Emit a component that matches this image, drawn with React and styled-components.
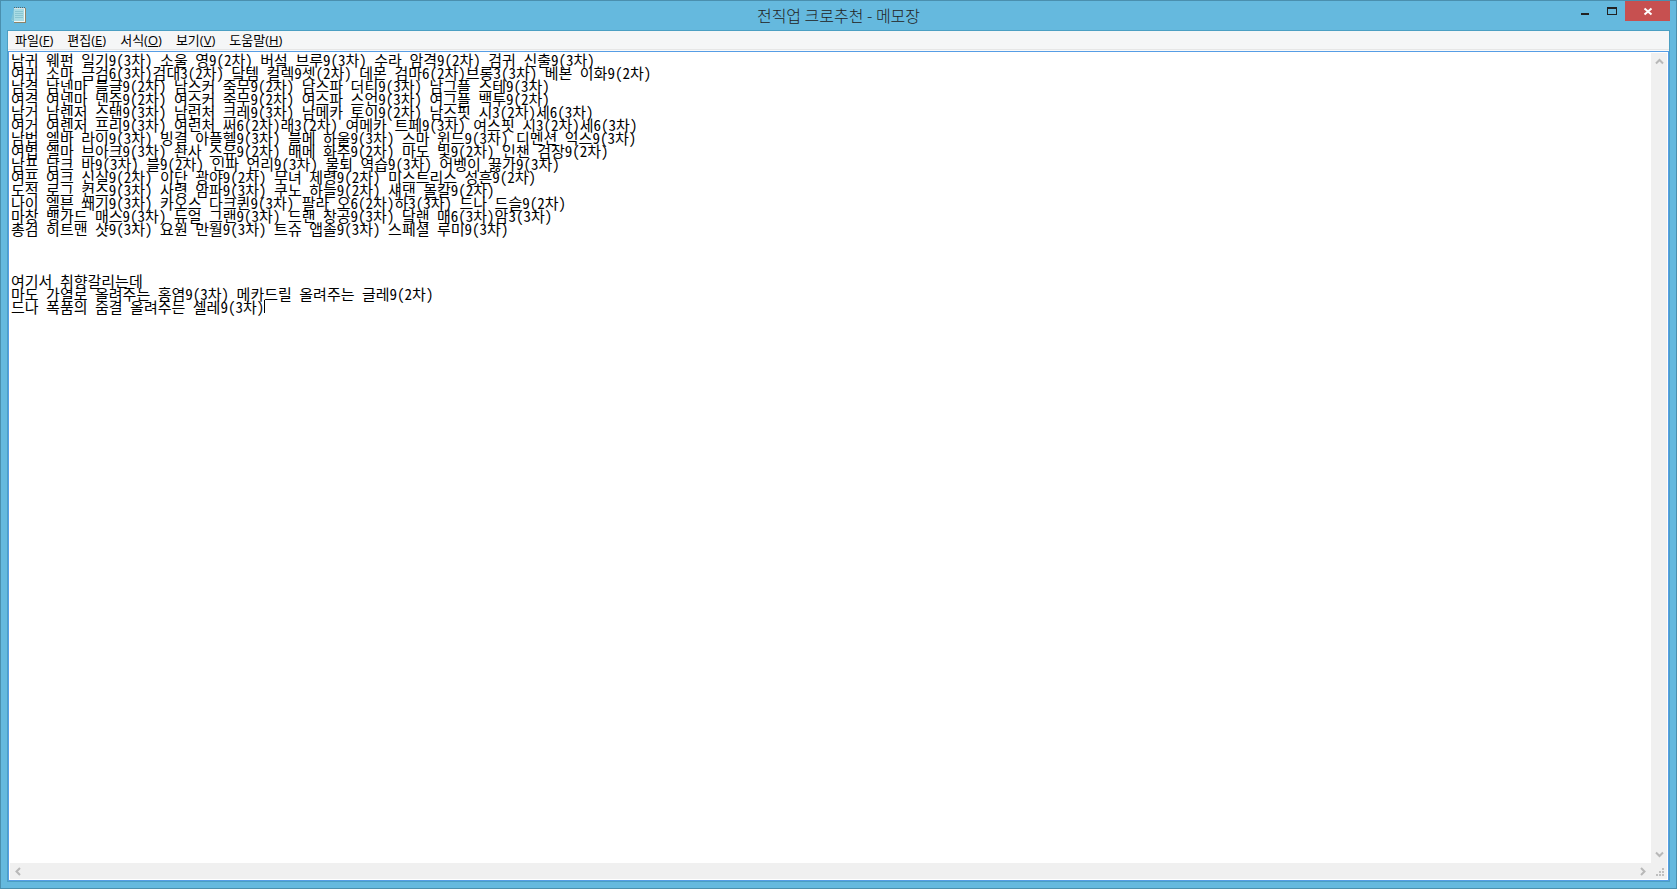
import { useState } from 'react';
import styled, { createGlobalStyle } from 'styled-components';

const LINE = 13;

const memo = `남귀 웨펀 일기9(3차) 소울 영9(2차) 버섴 브루9(3차) 수라 암격9(2차) 검귀 신출9(3차)
여귀 소마 금검6(3차)검대3(2차) 닼템 컬렉9셋(2차) 데몬 검마6(2차)브롱3(3차) 베본 이화9(2차)
남격 남넨마 블글9(2차) 남스커 죽무9(2차) 남스파 더티9(3차) 남그플 스테9(3차)
여격 여넨마 넨슈9(2차) 여스커 죽무9(2차) 여스파 스언9(3차) 여그플 백투9(2차)
남거 남렌저 스탠9(3차) 남런처 크레9(3차) 남메카 토이9(2차) 남스핏 시3(2차)세6(3차)
여거 여렌저 프리9(3차) 여런처 써6(2차)래3(2차) 여메카 트페9(3차) 여스핏 시3(2차)세6(3차)
남법 엘바 라이9(3차) 빙결 아플헬9(3차) 블메 하울9(3차) 스마 윈드9(3차) 디멘션 익스9(3차)
여법 엘마 브아크9(3차) 솬사 스유9(2차) 배메 화추9(2차) 마도 빛9(2차) 인챈 검장9(2차)
남프 남크 바9(3차) 블9(2차) 인파 언리9(3차) 물퇴 역습9(3차) 어벵이 끓가9(3차)
여프 여크 신실9(2차) 이단 광야9(2차) 무녀 제령9(2차) 미스트리스 성흔9(2차)
도적 로그 컨스9(3차) 사령 암파9(3차) 쿠노 하늘9(2차) 섀댄 몰칼9(2차)
나이 엘븐 쐐기9(3차) 카오스 다크퀸9(3차) 팔라 오6(2차)하3(3차) 드나 드슬9(2차)
마창 뱅가드 매스9(3차) 듀얼 그랜9(3차) 드랜 창공9(3차) 닼랜 매6(3차)암3(3차)
총검 히트맨 샷9(3차) 요원 만월9(3차) 트슈 앱솔9(3차) 스페셜 루미9(3차)



여기서 취향갈리는데
마도 가열로 올려주는 홍염9(3차) 메카드릴 올려주는 글레9(2차)
드나 폭품의 숨결 올려주는 셀레9(3차)`;

const menus = [
  { name: '파일', accessKey: 'F' },
  { name: '편집', accessKey: 'E' },
  { name: '서식', accessKey: 'O' },
  { name: '보기', accessKey: 'V' },
  { name: '도움말', accessKey: 'H' },
];

// 글자 폭 (em): 한글 0.92, 나머지 0.5
const measure = (line) =>
  [...line].reduce((sum, ch) => sum + (ch.charCodeAt(0) > 255 ? 0.92 : 0.5), 0);

const caretPlace = (text) => {
  const lines = text.split('\n');
  return {
    left: `${measure(lines[lines.length - 1])}em`,
    top: (lines.length - 1) * LINE,
  };
};

const chevrons = {
  up: 'M1 6.5 4.5 3 8 6.5',
  down: 'M1 1.5 4.5 5 8 1.5',
  left: 'M6 1 2.5 4.5 6 8',
  right: 'M2 1 5.5 4.5 2 8',
};

const Arrow = ({ to, label }) => (
  <SArrow type="button" aria-label={label}>
    <svg width="9" height="9" viewBox="0 0 9 9">
      <path d={chevrons[to]} fill="none" stroke="#b8b8b8" strokeWidth="2" />
    </svg>
  </SArrow>
);

const NotepadIcon = () => (
  <svg width="16" height="18" viewBox="0 0 16 18">
    <path d="M4 2h11v15H3z" fill="#8d8468" />
    <path d="M3 2h11v14H3z" fill="#f3f8f6" />
    <path d="M3 3h10v12H1z" fill="#a9dce4" />
    <path d="M0 14 3 3v12z" fill="#7fc3d6" />
    <path d="M4 5.5h8M4 7.5h8M4 9.5h8M4 11.5h8" stroke="#8ac6d2" />
    <path d="M3 1.5h11" stroke="#4f6a70" strokeDasharray="1 1" />
    <path d="M3 2.5h11" stroke="#d6e4e6" />
  </svg>
);

export default function App() {
  const [text, setText] = useState(memo);

  return (
    <>
      <GlobalStyle />
      <SWindow>
        <STitleBar>
          <SIconWrapper>
            <NotepadIcon />
          </SIconWrapper>
          <STitle>전직업 크로추천 - 메모장</STitle>
          <SControls>
            <SControl type="button" aria-label="최소화">
              <svg width="26" height="20" viewBox="0 0 26 20">
                <path d="M8 12h8v2H8z" fill="#222" />
              </svg>
            </SControl>
            <SControl type="button" aria-label="최대화">
              <svg width="26" height="20" viewBox="0 0 26 20">
                <path d="M8 6h10v8H8zM9 8v5h8V8z" fill="#222" fillRule="evenodd" />
              </svg>
            </SControl>
            <SControl type="button" aria-label="닫기" $close>
              <svg width="45" height="20" viewBox="0 0 45 20">
                <path d="M19.5 7.5l7 6M26.5 7.5l-7 6" stroke="#fff" strokeWidth="2" />
              </svg>
            </SControl>
          </SControls>
        </STitleBar>
        <SClient>
          <SMenuBar>
            {menus.map((menu) => (
              <SMenuButton type="button" key={menu.name}>
                {menu.name}(<u>{menu.accessKey}</u>)
              </SMenuButton>
            ))}
          </SMenuBar>
          <SEditor>
            <SPage>
              <STextArea
                aria-label="메모 내용"
                wrap="off"
                spellCheck={false}
                value={text}
                onChange={(e) => setText(e.target.value)}
              />
              <SCaret style={caretPlace(text)} />
            </SPage>
            <SScrollBar $vertical>
              <Arrow to="up" label="위로" />
              <Arrow to="down" label="아래로" />
            </SScrollBar>
            <SScrollBar>
              <Arrow to="left" label="왼쪽으로" />
              <Arrow to="right" label="오른쪽으로" />
            </SScrollBar>
            <SGrip>
              <svg width="8" height="8" viewBox="0 0 8 8">
                <path
                  d="M6 0h2v2H6zM3 3h2v2H3zM6 3h2v2H6zM0 6h2v2H0zM3 6h2v2H3zM6 6h2v2H6z"
                  fill="#bfbfbf"
                />
              </svg>
            </SGrip>
          </SEditor>
        </SClient>
      </SWindow>
    </>
  );
}

const GlobalStyle = createGlobalStyle`
  * {
    box-sizing: border-box;
  }

  body {
    margin: 0;
  }

  button {
    padding: 0;
    border: 0;
    background: none;
    color: inherit;
    font: inherit;
  }

  svg {
    display: block;
  }
`;

const SWindow = styled.div`
  display: flex;
  flex-direction: column;
  height: 100vh;
  padding: 0 6px 6px;
  border: 1px solid #4a8fae;
  background: #65b9de;
  font-family: 'Open Sans', 'Noto Sans CJK KR', sans-serif;
`;

const STitleBar = styled.header`
  display: grid;
  grid-template-columns: 1fr auto 1fr;
  height: 29px;
`;

const SIconWrapper = styled.div`
  padding: 5px 4px;
`;

const STitle = styled.h1`
  margin: 0;
  color: #222;
  font-family: 'Noto Sans CJK KR', sans-serif;
  font-size: 16px;
  font-weight: 300;
  line-height: 28px;
`;

const SControls = styled.div`
  display: flex;
  justify-content: flex-end;
  align-items: flex-start;
`;

const SControl = styled.button`
  background: ${(props) => (props.$close ? '#c75050' : 'none')};
`;

const SClient = styled.main`
  display: flex;
  flex: 1;
  flex-direction: column;
  min-height: 0;
  border: 1px solid #4b9fc3;
  background: #fafafa;
`;

const SMenuBar = styled.nav`
  display: flex;
  height: 19px;
  margin-bottom: 1px;
  border-bottom: 1px solid #e6e6e6;
  background: #f5f6f7;
`;

const SMenuButton = styled.button`
  padding: 0 7px;
  color: #000;
  font-size: 13px;
  line-height: 18px;
`;

const SEditor = styled.div`
  display: grid;
  flex: 1;
  grid-template-columns: 1fr 16px;
  grid-template-rows: 1fr 16px;
  min-height: 0;
  padding: 1px;
  border: 1px solid #569de5;
  background: #fff;
`;

const SPage = styled.div`
  display: grid;
  position: relative;
  margin-left: 1px;
  font-family: 'Noto Sans Mono CJK KR', 'Noto Sans CJK KR', monospace;
  font-size: 15px;
  font-weight: 300;
  line-height: ${LINE}px;
`;

const STextArea = styled.textarea`
  width: 100%;
  height: 100%;
  padding: 0;
  border: 0;
  outline: 0;
  overflow: hidden;
  resize: none;
  color: #000;
  background: #fff;
  font: inherit;
  white-space: pre;
`;

const SCaret = styled.span`
  position: absolute;
  width: 1px;
  height: ${LINE}px;
  background: #000;
`;

const SScrollBar = styled.div`
  display: flex;
  flex-direction: ${(props) => (props.$vertical ? 'column' : 'row')};
  justify-content: space-between;
  background: #f0f0f0;
`;

const SArrow = styled.button`
  display: grid;
  place-items: center;
  width: 16px;
  height: 16px;
`;

const SGrip = styled.div`
  display: grid;
  place-items: end;
  padding: 3px;
  background: #f0f0f0;
`;
